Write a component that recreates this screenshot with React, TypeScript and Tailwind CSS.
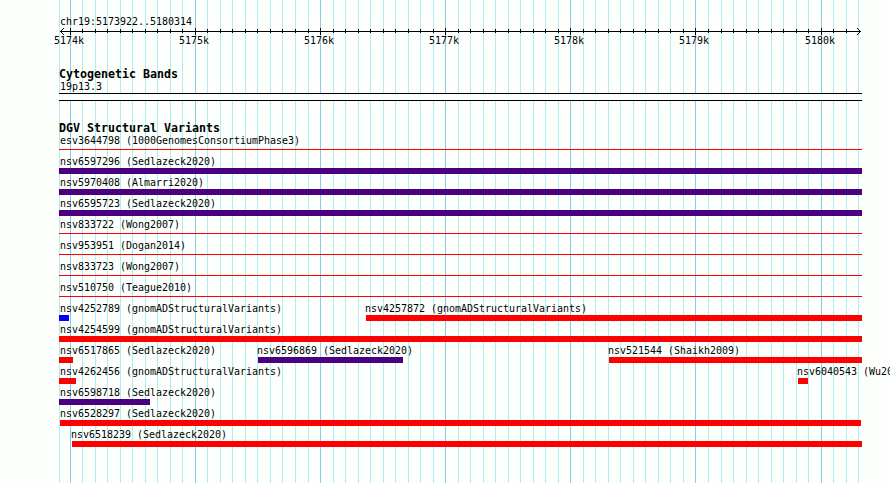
import { Fragment } from "react";

type Feature = {
  name: string;
  start: number;
  end: number;
  color: string;
  thin?: boolean;
};

const LEFT = 59;
const RIGHT = 862;
const RED = "bg-[#ff0000]";
const INDIGO = "bg-[#4b0082]";
const BLUE = "bg-[#0000ff]";

const full = (name: string, color: string, thin = false): Feature => ({
  name,
  start: LEFT,
  end: RIGHT,
  color,
  thin,
});

const tracks: Feature[][] = [
  [full("esv3644798 (1000GenomesConsortiumPhase3)", RED, true)],
  [full("nsv6597296 (Sedlazeck2020)", INDIGO)],
  [full("nsv5970408 (Almarri2020)", INDIGO)],
  [full("nsv6595723 (Sedlazeck2020)", INDIGO)],
  [full("nsv833722 (Wong2007)", RED, true)],
  [full("nsv953951 (Dogan2014)", RED, true)],
  [full("nsv833723 (Wong2007)", RED, true)],
  [full("nsv510750 (Teague2010)", RED, true)],
  [
    { name: "nsv4252789 (gnomADStructuralVariants)", start: 59, end: 69, color: BLUE },
    { name: "nsv4257872 (gnomADStructuralVariants)", start: 366, end: 862, color: RED },
  ],
  [full("nsv4254599 (gnomADStructuralVariants)", RED)],
  [
    { name: "nsv6517865 (Sedlazeck2020)", start: 59, end: 73, color: RED },
    { name: "nsv6596869 (Sedlazeck2020)", start: 258, end: 403, color: INDIGO },
    { name: "nsv521544 (Shaikh2009)", start: 609, end: 862, color: RED },
  ],
  [
    { name: "nsv4262456 (gnomADStructuralVariants)", start: 59, end: 76, color: RED },
    { name: "nsv6040543 (Wu20", start: 798, end: 808, color: RED },
  ],
  [{ name: "nsv6598718 (Sedlazeck2020)", start: 59, end: 150, color: INDIGO }],
  [{ name: "nsv6528297 (Sedlazeck2020)", start: 60, end: 861, color: RED }],
  [{ name: "nsv6518239 (Sedlazeck2020)", start: 72, end: 862, color: RED }],
];

const ticks = Array.from({ length: 64 }, (_, i) => ({
  x: Math.floor(70.225 + 12.515 * i),
  major: i % 10 === 0,
}));

function Grid() {
  return (
    <svg className="absolute inset-0" width="890" height="483" shapeRendering="crispEdges">
      <rect x={59} y={0} width={1} height={483} fill="#afeeee" />
      {ticks.map((t) => (
        <rect key={t.x} x={t.x} y={0} width={1} height={483} fill={t.major ? "#87ceeb" : "#afeeee"} />
      ))}
    </svg>
  );
}

function Axis() {
  return (
    <svg className="block" width="890" height="8" shapeRendering="crispEdges">
      <rect x={60} y={4} width={801} height={1} />
      {ticks
        .filter((t) => t.x < 850)
        .map((t) => (
          <rect key={t.x} x={t.x} y={t.major ? 1 : 2} width={1} height={t.major ? 7 : 4} />
        ))}
      {[1, 2, 3].map((d) => (
        <Fragment key={d}>
          <rect x={60 + d} y={4 - d} width={1} height={1} />
          <rect x={60 + d} y={4 + d} width={1} height={1} />
          <rect x={860 - d} y={4 - d} width={1} height={1} />
          <rect x={860 - d} y={4 + d} width={1} height={1} />
        </Fragment>
      ))}
    </svg>
  );
}

/* Condensed monospace label, six pixels per character. */
function Label({ children }: { children: string }) {
  return (
    <span className="block w-max origin-top-left scale-x-[0.906] whitespace-pre font-['DejaVu_Sans_Mono',monospace] text-[11px] leading-[11px] text-black">
      {children}
    </span>
  );
}

function Heading({ children }: { children: string }) {
  return (
    <h2 className="h-[13px] whitespace-pre pl-[59px] font-['DejaVu_Sans_Mono',monospace] text-[11.63px] leading-[13px] font-bold text-black">
      {children}
    </h2>
  );
}

function Row({ features }: { features: Feature[] }) {
  return (
    <div className="flex h-[21px]">
      {features.map((f, i) => (
        <div
          key={f.name}
          className="shrink-0"
          style={{ marginLeft: f.start - (i ? features[i - 1].end : 0), width: f.end - f.start }}
        >
          <div className={`h-[14px] w-0 pt-[2px] ${f.start === LEFT ? "ml-px" : f.start > 60 ? "-ml-px" : ""}`}>
            <Label>{f.name}</Label>
          </div>
          <div className={f.thin ? `mt-[2px] h-px ${f.color}` : `h-[6px] ${f.color}`} />
        </div>
      ))}
    </div>
  );
}

export default function App() {
  return (
    <main className="relative h-[483px] w-[890px] overflow-hidden bg-[#fdfffc]">
      <Grid />
      <div className="relative flex flex-col">
        <div className="h-[27px] pt-[16px] pl-[60px]">
          <Label>chr19:5173922..5180314</Label>
        </div>
        <Axis />
        <div className="flex h-[33px] pl-[54px]">
          {["5174k", "5175k", "5176k", "5177k", "5178k", "5179k", "5180k"].map((t) => (
            <div key={t} className={t === "5179k" ? "w-[126px] shrink-0" : "w-[125px] shrink-0 last:w-[60px]"}>
              <Label>{t}</Label>
            </div>
          ))}
        </div>
        <Heading>Cytogenetic Bands</Heading>
        <div className="h-[12px] pl-[60px]">
          <Label>19p13.3</Label>
        </div>
        <div className="ml-[59px] h-[8px] w-[803px] border-y border-black bg-[#fdfffc]" />
        <div className="h-[21px]" />
        <Heading>DGV Structural Variants</Heading>
        <div className="-mt-[2px]">
          {tracks.map((features) => (
            <Row key={features[0].name} features={features} />
          ))}
        </div>
      </div>
    </main>
  );
}
